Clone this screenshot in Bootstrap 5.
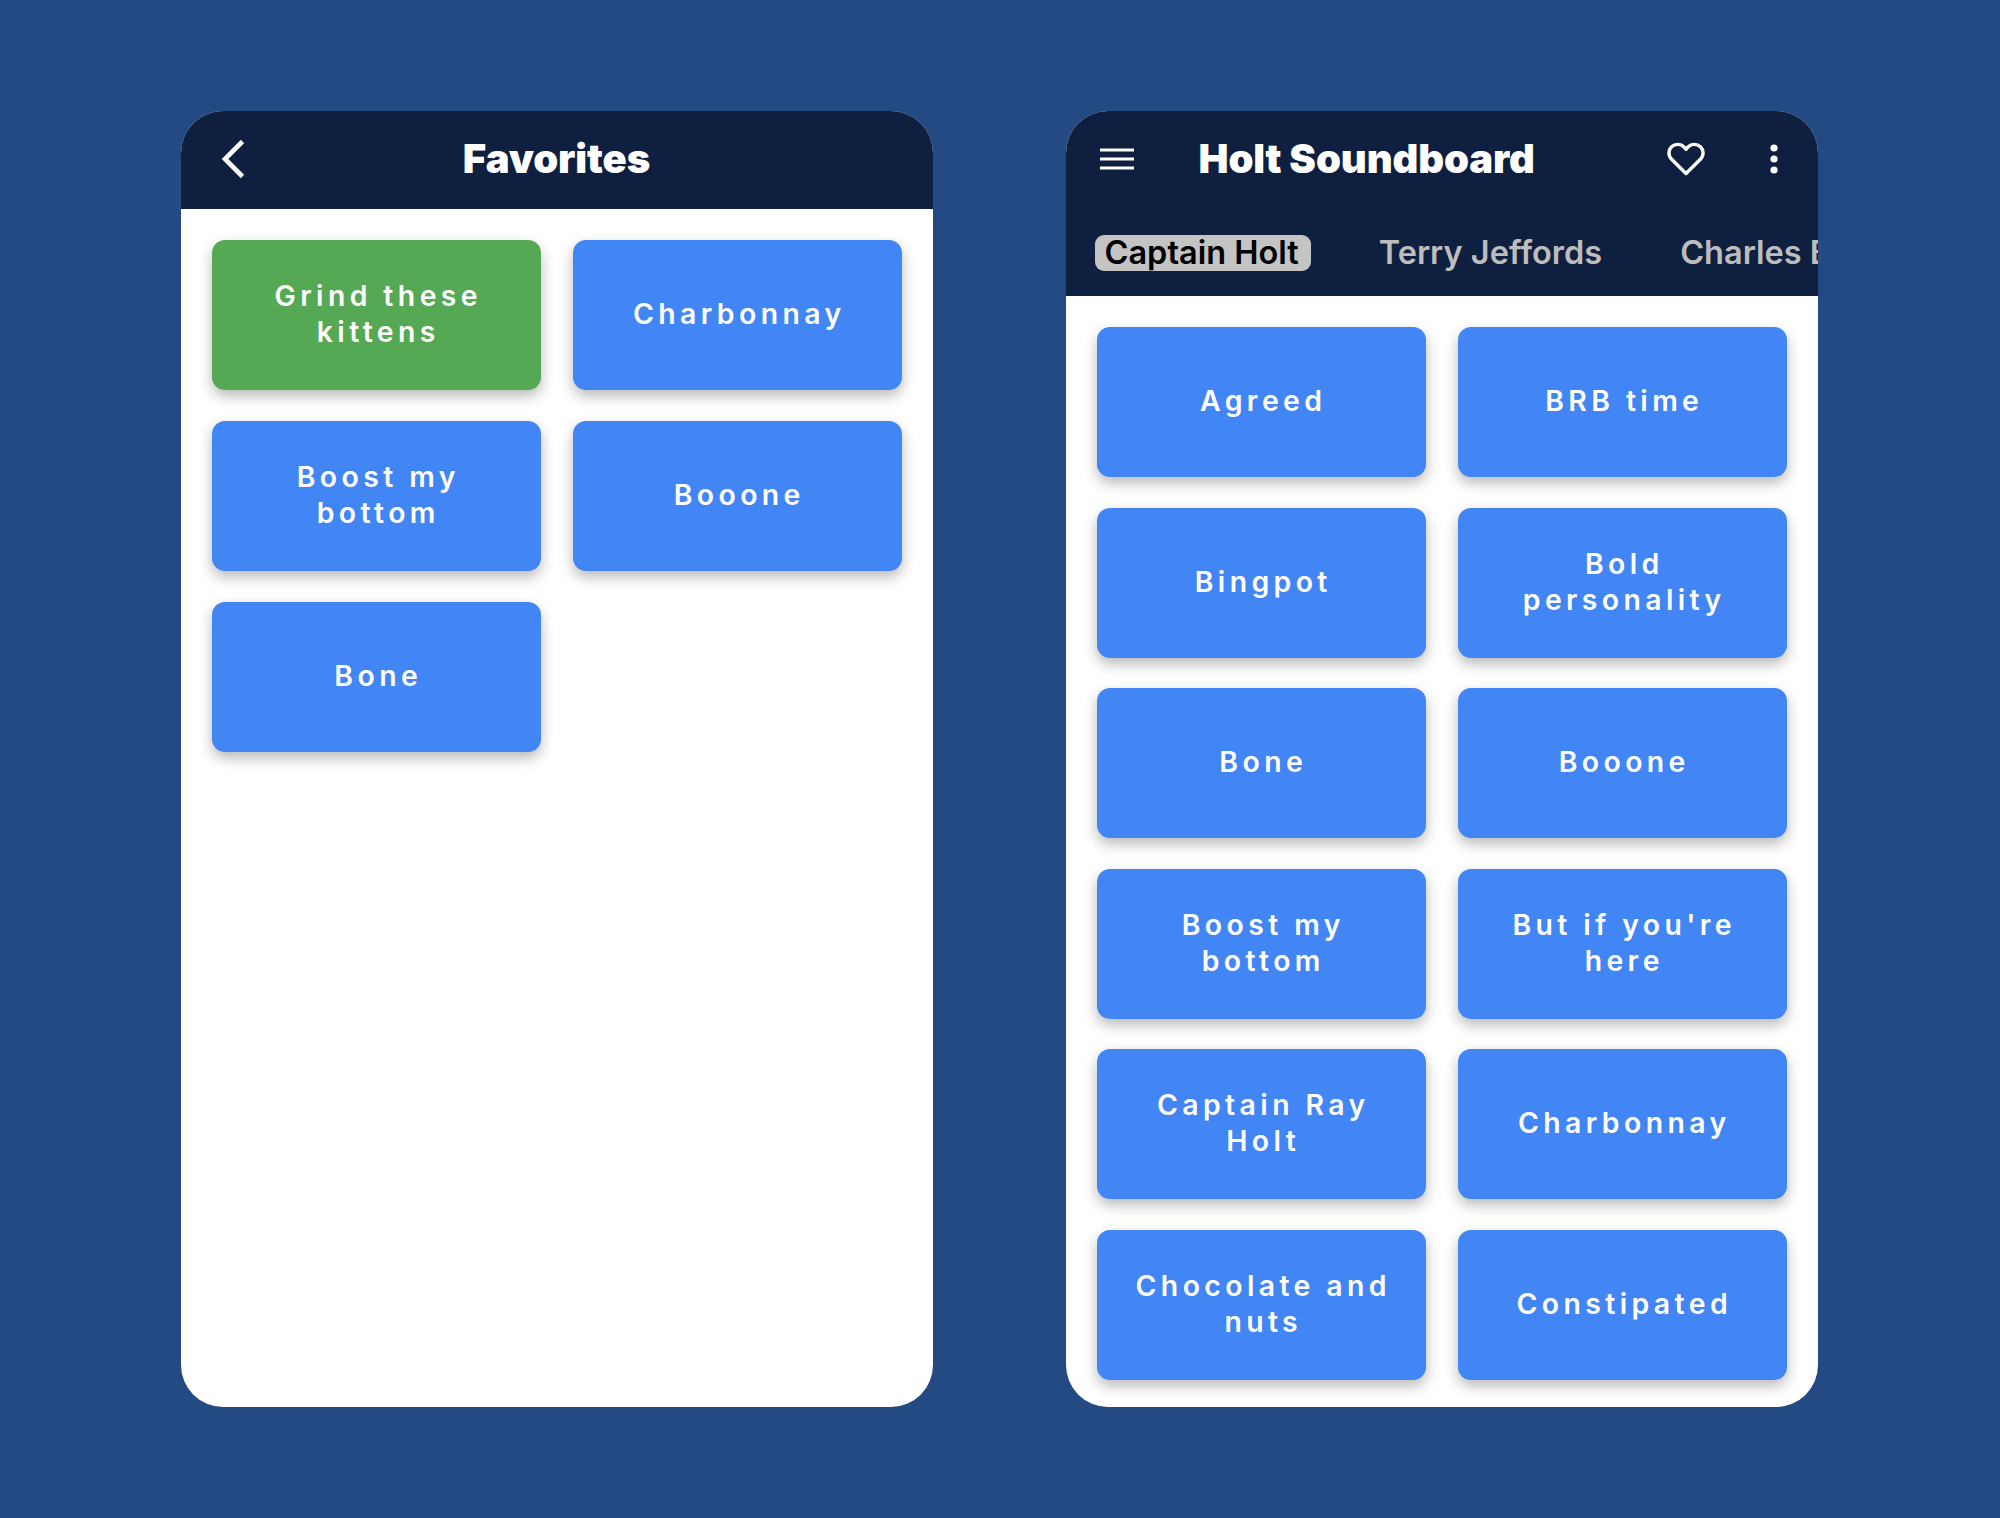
<!DOCTYPE html>
<html lang="en">
<head>
<meta charset="utf-8">
<title>Holt Soundboard</title>
<link href="https://cdn.jsdelivr.net/npm/bootstrap@5.3.0/dist/css/bootstrap.min.css" rel="stylesheet">
<style>
html, body { height: 100%; }
body { background: #244a84; font-family: Inter, "Liberation Sans", sans-serif; }
.stage { width: 2000px; height: 1518px; padding: 111px 2px 0 0; gap: 133px; }
.phone { width: 752px; height: 1296px; background: #fff; border-radius: 42px; overflow: hidden; }
.topbar { background: #0f1f3f; color: #fff; }
.toprow { height: 98px; padding-bottom: 2px; }
.apptitle { font-family: Inter, sans-serif; font-weight: 900; font-size: 40px; line-height: 1; letter-spacing: -.1px; color: #fff; margin: 0 0 1px; }
.backslot { left: 40px; top: 28px; }
.holtrow { padding-left: 34px; padding-right: 40px; }
.holtrow .apptitle { margin-left: 65px; }
.dotsvg { margin-left: 65px; }
.tabstrip { height: 87px; padding-left: 29px; white-space: nowrap; overflow: hidden; font-size: 32.5px; font-weight: 600; line-height: 36px; }
.tabitem { color: #bdbdbd; padding: 0 10px; border-radius: 9px; margin-right: 58px; }
.tabitem.is-on { background: #c4c4c4; color: #000; padding-right: 12px; }
.soundgrid { display: grid; grid-template-columns: 329.5px 329.5px; column-gap: 31.5px; row-gap: 31px; padding: 31px; grid-auto-rows: 150px; }
.soundgrid.tall { row-gap: 30.6px; }
.soundbtn { display: flex; align-items: center; justify-content: center; text-align: center; background: #4285f4; color: #fff; border: 0; border-radius: 13px; box-shadow: 0 6px 14px rgba(0,0,0,.28); font-size: 28.4px; font-weight: 600; line-height: 36px; letter-spacing: 4.4px; padding: 0 30px 2px 34px; }
.soundbtn:hover, .soundbtn:active { background: #4285f4 !important; color: #fff !important; }
.soundbtn.is-fav { background: #55a854; }
.soundbtn.is-fav:hover { background: #55a854 !important; }
</style>
</head>
<body class="m-0">
<div class="stage d-flex justify-content-center align-items-start">
  <section class="phone d-flex flex-column">
    <header class="topbar toprow position-relative d-flex align-items-center justify-content-center">
      <svg class="position-absolute backslot" width="24" height="40" viewBox="0 0 24 40" aria-hidden="true"><path d="M21.5 2.500 4 20l17.500 17.500" fill="none" stroke="#fff" stroke-width="4.600"/></svg>
      <h1 class="apptitle">Favorites</h1>
    </header>
    <div class="soundgrid">
      <button class="btn soundbtn is-fav" type="button">Grind these kittens</button>
      <button class="btn soundbtn" type="button">Charbonnay</button>
      <button class="btn soundbtn" type="button">Boost my bottom</button>
      <button class="btn soundbtn" type="button">Booone</button>
      <button class="btn soundbtn" type="button">Bone</button>
    </div>
  </section>
  <section class="phone d-flex flex-column">
    <header class="topbar">
      <div class="toprow holtrow d-flex align-items-center">
        <svg width="34" height="22" viewBox="0 0 34 22" aria-hidden="true"><path d="M0 2h34M0 11h34M0 20h34" stroke="#fff" stroke-width="3.200"/></svg>
        <h1 class="apptitle me-auto">Holt Soundboard</h1>
        <svg width="38" height="34" viewBox="0 0 38 34" aria-hidden="true"><path d="M19 31.500 4.600 17.200C.9 13.500 1.200 8 4.600 4.800 8.200 1.400 13.800 1.600 17 5l2 2.300L21 5c3.200-3.400 8.800-3.600 12.400-.2 3.400 3.200 3.700 8.700 0 12.400Z" fill="none" stroke="#fff" stroke-width="3.400" stroke-linejoin="round"/></svg>
        <svg class="dotsvg" width="8" height="30" viewBox="0 0 8 30" aria-hidden="true"><circle cx="4" cy="4" r="3.600" fill="#fff"/><circle cx="4" cy="15" r="3.600" fill="#fff"/><circle cx="4" cy="26" r="3.600" fill="#fff"/></svg>
      </div>
      <nav class="tabstrip d-flex align-items-center">
        <span class="tabitem is-on">Captain Holt</span>
        <span class="tabitem">Terry Jeffords</span>
        <span class="tabitem">Charles Boyle</span>
      </nav>
    </header>
    <div class="soundgrid tall">
      <button class="btn soundbtn" type="button">Agreed</button>
      <button class="btn soundbtn" type="button">BRB time</button>
      <button class="btn soundbtn" type="button">Bingpot</button>
      <button class="btn soundbtn" type="button">Bold personality</button>
      <button class="btn soundbtn" type="button">Bone</button>
      <button class="btn soundbtn" type="button">Booone</button>
      <button class="btn soundbtn" type="button">Boost my bottom</button>
      <button class="btn soundbtn" type="button">But if you're here</button>
      <button class="btn soundbtn" type="button">Captain Ray Holt</button>
      <button class="btn soundbtn" type="button">Charbonnay</button>
      <button class="btn soundbtn" type="button">Chocolate and nuts</button>
      <button class="btn soundbtn" type="button">Constipated</button>
    </div>
  </section>
</div>
<script src="https://cdn.jsdelivr.net/npm/bootstrap@5.3.0/dist/js/bootstrap.bundle.min.js"></script>
</body>
</html>
